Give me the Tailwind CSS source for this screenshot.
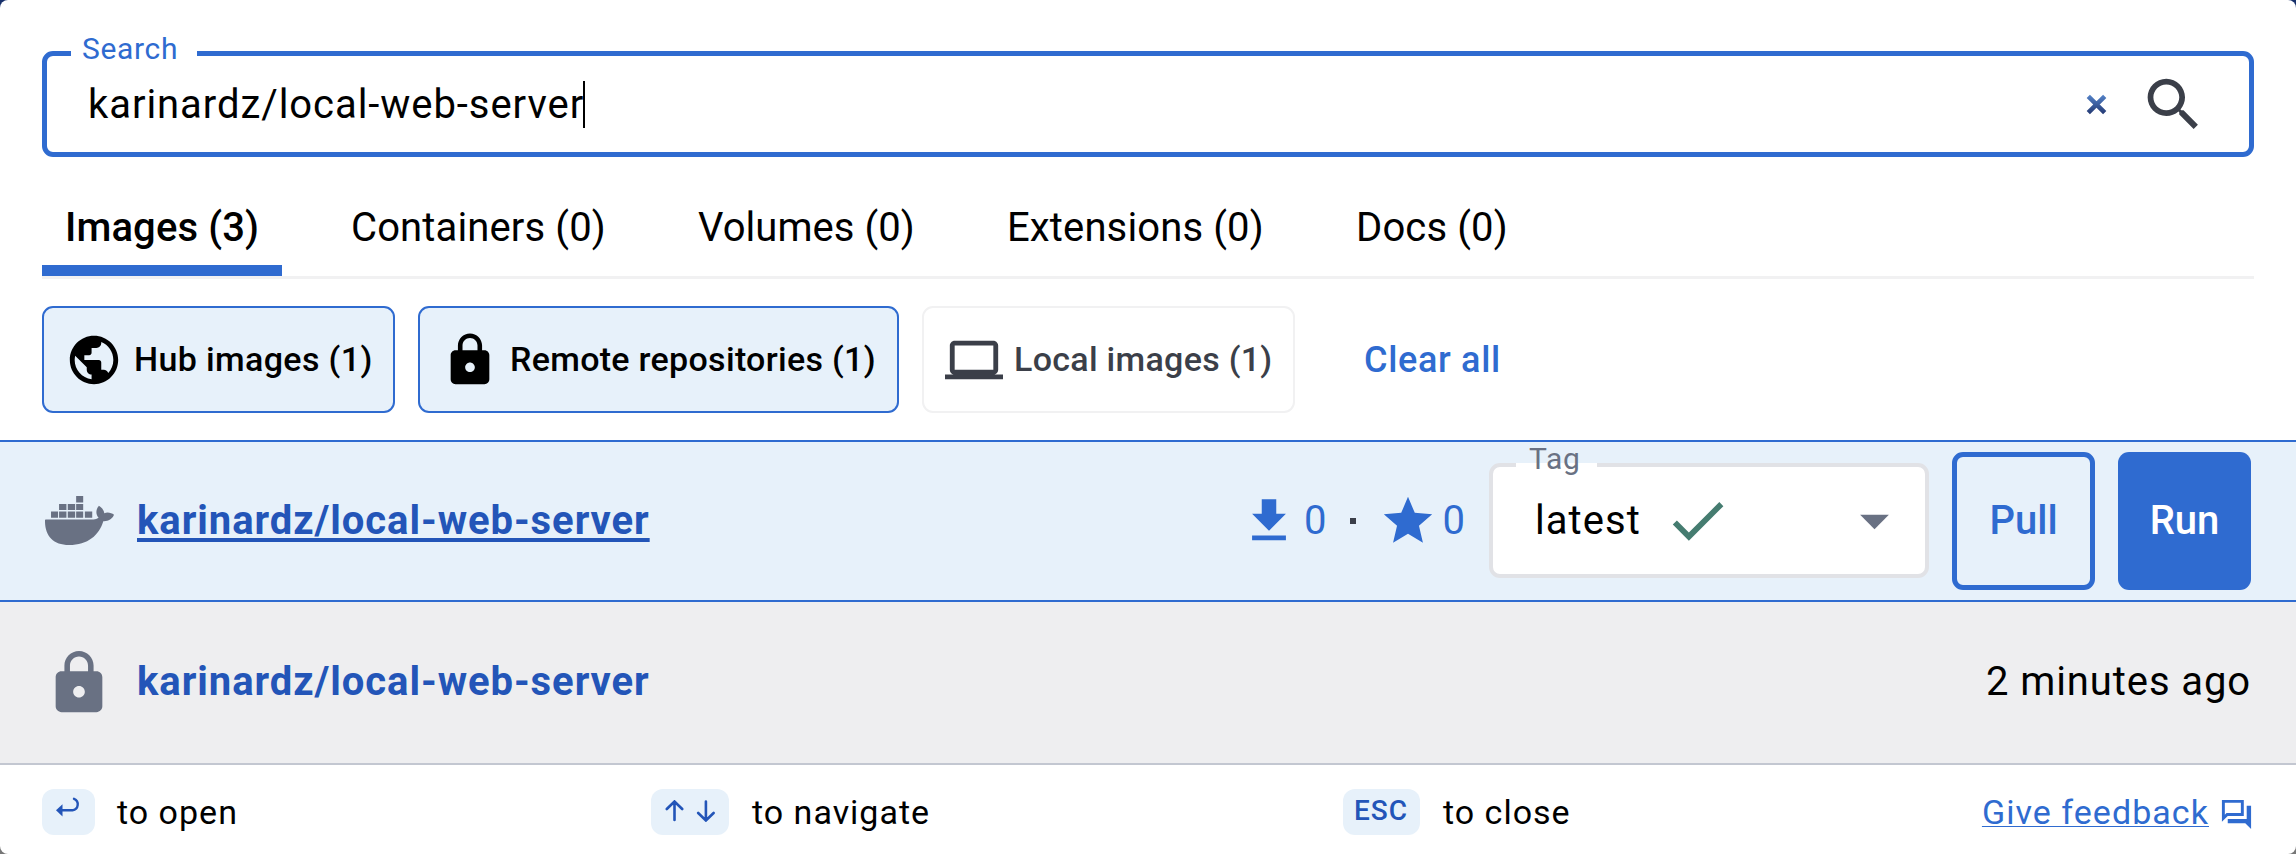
<!DOCTYPE html>
<html lang="en">
<head>
<meta charset="utf-8">
<title>Search</title>
<script src="https://cdn.jsdelivr.net/npm/@tailwindcss/browser@4"></script>
</head>
<body class="bg-linear-to-b from-[#17306b] to-[#777777] font-['Roboto',sans-serif] text-black">
<main class="flex h-[854px] w-[2296px] flex-col overflow-hidden rounded-[8px] bg-white whitespace-nowrap">

  <div class="px-[42px] pt-[51px]">
    <!-- Search field -->
    <div class="relative flex h-[106px] items-center rounded-[11px] border-5 border-[#2f6bd0] pl-[41px]">
      <span class="absolute -top-[5px] left-[24px] h-[5px] w-[126px] bg-white"></span>
      <label class="absolute -top-[22px] left-[35px] text-[30px] leading-[30px] tracking-[0.67px] text-[#2f6bd0]">Search</label>
      <span class="pt-[2px] text-[40px] leading-[48px] tracking-[0.94px]">karinardz/local-web-server</span>
      <span class="-ml-px h-[47px] w-[2px] bg-black"></span>
      <svg class="mr-[32px] ml-auto size-[21px]" viewBox="0 0 21 21">
        <defs><linearGradient id="g" x1="0" y1="0" x2="0" y2="21" gradientUnits="userSpaceOnUse"><stop stop-color="#5585cc"/><stop offset="1" stop-color="#22366f"/></linearGradient></defs>
        <path d="M2.3 2.3l16.4 16.4M18.7 2.3L2.3 18.7" stroke="url(#g)" stroke-width="4.600" fill="none"/>
      </svg>
      <svg class="mr-[41px] size-[69px] fill-[#3b3f49]" viewBox="0 0 24 24"><path d="M15.5 14h-.79l-.28-.27C15.41 12.59 16 11.11 16 9.5 16 5.91 13.09 3 9.5 3S3 5.91 3 9.5 5.91 16 9.5 16c1.61 0 3.09-.59 4.23-1.57l.27.28v.79l5 4.99L20.49 19l-4.99-5zm-6 0C7.01 14 5 11.99 5 9.5S7.01 5 9.5 5 14 7.01 14 9.5 11.99 14 9.5 14z"/></svg>
    </div>

    <!-- Tabs -->
    <nav class="mt-[22px] flex h-[100px] gap-[45px] border-b-3 border-[#f1f1f2] text-[40px] tracking-[0.13px]">
      <a class="flex w-[240px] items-center border-b-11 border-[#2f6bd0] pt-[11px] pl-[23px] font-medium">Images (3)</a>
      <a class="flex w-[304px] items-center pl-[24px]">Containers (0)</a>
      <a class="flex w-[263px] items-center pl-[22px] tracking-[0.06px]">Volumes (0)</a>
      <a class="flex w-[304px] items-center pl-[23px]">Extensions (0)</a>
      <a class="flex items-center pl-[23px]">Docs (0)</a>
    </nav>

    <!-- Filters -->
    <div class="my-[27px] flex h-[107px] gap-[23px] text-[34px] font-medium">
      <button class="flex w-[353px] items-center gap-[11px] rounded-[11px] border-2 border-[#2f6bd0] bg-[#e7f1fa] pl-[21px] tracking-[0.36px]">
        <svg class="size-[58px] shrink-0" viewBox="0 0 24 24"><path d="M12 2C6.48 2 2 6.48 2 12s4.48 10 10 10 10-4.48 10-10S17.52 2 12 2zm-1 17.93c-3.95-.49-7-3.85-7-7.93 0-.62.08-1.21.21-1.79L9 15v1c0 1.1.9 2 2 2v1.93zm6.900-2.540c-.26-.81-1-1.390-1.900-1.390h-1v-3c0-.55-.45-1-1-1H8v-2h2c.55 0 1-.45 1-1V7h2c1.100 0 2-.9 2-2v-.41c2.930 1.190 5 4.060 5 7.410 0 2.080-.8 3.970-2.100 5.390z"/></svg>
        <span>Hub images (1)</span>
      </button>
      <button class="flex w-[481px] items-center gap-[11px] rounded-[11px] border-2 border-[#2f6bd0] bg-[#e7f1fa] pl-[21px] tracking-[0.3px]">
        <svg class="size-[58px] shrink-0" viewBox="0 0 24 24"><path d="M18 8h-1V6c0-2.760-2.240-5-5-5S7 3.240 7 6v2H6c-1.100 0-2 .9-2 2v10c0 1.100.9 2 2 2h12c1.100 0 2-.9 2-2V10c0-1.100-.9-2-2-2zm-6 9c-1.100 0-2-.9-2-2s.9-2 2-2 2 .9 2 2-.9 2-2 2zm3.100-9H8.900V6c0-1.710 1.390-3.100 3.100-3.100s3.100 1.390 3.100 3.100v2z"/></svg>
        <span>Remote repositories (1)</span>
      </button>
      <button class="flex w-[373px] items-center gap-[11px] rounded-[11px] border-2 border-[#f1f1f2] bg-white pl-[21px] tracking-[0.29px] text-[#3b3f49]">
        <svg class="size-[58px] shrink-0 fill-[#3b3f49]" viewBox="0 0 24 24"><path d="M20 18c1.100 0 2-.9 2-2V6c0-1.100-.9-2-2-2H4c-1.100 0-2 .9-2 2v10c0 1.100.9 2 2 2H0v2h24v-2h-4zM4 6h16v10H4V6z"/></svg>
        <span>Local images (1)</span>
      </button>
      <button class="ml-[46px] text-[36px] tracking-[0.68px] text-[#2f6bd0]">Clear all</button>
    </div>
  </div>

  <!-- Hub result -->
  <div class="flex h-[162px] shrink-0 items-center border-y-2 border-[#2f6bd0] bg-[#e7f1fa] pr-[45px] pl-[45px] text-[40px]">
    <svg class="mb-[2px] h-[49px] w-[69px] fill-[#697183]" viewBox="27 48 206 146">
      <path d="M120 48h21v19h-21zM69 72h22v18H69zM95 72h22v18H95zM120 72h21v18h-21zM45 94h21v19H45zM69 94h22v19H69zM95 94h22v19H95zM120 94h21v19h-21zM146 94h22v19h-22z"/>
      <path d="M29 118H172Q180 118 187 113C178 103 178 88 188 77C197 83 203 90 204 99C214 95 226 98 233 104C228 117 215 124 201 123C189 164 155 194 99 194C50 194 26 165 27 120Q27 118 29 118z"/>
    </svg>
    <a class="ml-[23px] font-bold tracking-[0.94px] text-[#2355b8] underline decoration-4 underline-offset-[4px] [text-decoration-skip-ink:none]">karinardz/local-web-server</a>

    <div class="mr-[24px] ml-auto flex items-center text-[#2f6bd0]">
      <svg class="mb-px size-[58px] fill-[#2f6bd0]" viewBox="0 0 24 24"><path d="M19 9h-4V3H9v6H5l7 7 7-7zM5 18v2h14v-2H5z"/></svg>
      <span class="ml-[6px]">0</span>
      <span class="ml-[23px] size-[6px] bg-[#3b3f49]"></span>
      <svg class="mb-px ml-[23px] size-[58px] fill-[#2f6bd0]" viewBox="0 0 24 24"><path d="M12 17.270L18.180 21l-1.640-7.030L22 9.240l-7.190-.61L12 2 9.190 8.630 2 9.240l5.460 4.730L5.820 21z"/></svg>
      <span class="ml-[6px]">0</span>
    </div>

    <div class="relative mb-px flex h-[115px] w-[440px] items-center rounded-[11px] border-4 border-[#e1e2e6] bg-white pl-[42px]">
      <span class="absolute -top-[4px] left-[23px] h-[4px] w-[81px] bg-white"></span>
      <label class="absolute -top-[23px] left-[36px] text-[30px] leading-[30px] tracking-[0.67px] text-[#697183]">Tag</label>
      <span class="tracking-[1.05px]">latest</span>
      <svg class="ml-[22px] size-[69px] fill-[#457c70]" viewBox="0 0 24 24"><path d="M9 16.170L4.830 12l-1.420 1.410L9 19 21 7l-1.410-1.410z"/></svg>
      <svg class="mr-[16px] ml-auto size-[69px] fill-[#697183]" viewBox="0 0 24 24"><path d="M7 10l5 5 5-5z"/></svg>
    </div>
    <button class="ml-[23px] h-[138px] w-[143px] rounded-[11px] border-5 border-[#2f6bd0] font-medium text-[#2f6bd0]">Pull</button>
    <button class="ml-[23px] h-[138px] w-[133px] rounded-[11px] bg-[#2f6bd0] font-medium text-white">Run</button>
  </div>

  <!-- Remote repository result -->
  <div class="flex h-[163px] shrink-0 items-center border-b-2 border-[#c3c7d1] bg-[#eeeef0] pr-[45px] pl-[44px] text-[40px]">
    <svg class="size-[70px] fill-[#697183]" viewBox="0 0 24 24"><path d="M18 8h-1V6c0-2.760-2.240-5-5-5S7 3.240 7 6v2H6c-1.100 0-2 .9-2 2v10c0 1.100.9 2 2 2h12c1.100 0 2-.9 2-2V10c0-1.100-.9-2-2-2zm-6 9c-1.100 0-2-.9-2-2s.9-2 2-2 2 .9 2 2-.9 2-2 2zm3.100-9H8.900V6c0-1.710 1.390-3.100 3.100-3.100s3.100 1.390 3.100 3.100v2z"/></svg>
    <a class="mb-[2px] ml-[23px] font-bold tracking-[0.94px] text-[#2355b8]">karinardz/local-web-server</a>
    <span class="mb-[2px] ml-auto tracking-[0.9px]">2 minutes ago</span>
  </div>

  <!-- Shortcuts -->
  <footer class="flex items-start px-[42px] pt-[24px] text-[34px] leading-[46px] tracking-[1px]">
    <div class="flex w-[609px] gap-[22px]">
      <kbd class="flex h-[46px] w-[53px] items-start rounded-[12px] bg-[#e7f1fa] pt-[8px] pl-[14px]">
        <svg class="h-[20px] w-[25px]" viewBox="0 0 25 20"><path d="M0 13.300L6.500 7.200v12.200z" fill="#2355b8"/><path d="M5 13.300H16a6 6 0 0 0 1.500-11.500" transform="translate(.5 0)" fill="none" stroke="#2355b8" stroke-width="2.400" stroke-linecap="round"/></svg>
      </kbd>
      <span>to open</span>
    </div>
    <div class="flex w-[692px] gap-[23px]">
      <kbd class="flex h-[46px] w-[78px] items-start justify-center rounded-[12px] bg-[#e7f1fa] pt-[11px]">
        <svg class="h-[22px] w-[50px]" viewBox="0 0 50 22"><path d="M9.500 20V2M1.800 9l7.700-7.500L17.200 9M40.900 1.500V20M33.200 13l7.700 7.500L48.600 13" fill="none" stroke="#2355b8" stroke-width="2.600" stroke-linecap="round"/></svg>
      </kbd>
      <span>to navigate</span>
    </div>
    <div class="flex gap-[23px]">
      <kbd class="h-[46px] w-[77px] rounded-[12px] bg-[#e7f1fa] pl-[11px] font-['Roboto',sans-serif] text-[28px] leading-[44px] font-medium text-[#2355b8]">ESC</kbd>
      <span>to close</span>
    </div>
    <div class="ml-auto flex gap-[10px] text-[#2f6bd0]">
      <a class="tracking-[1.05px] underline decoration-1 underline-offset-[2px] [text-decoration-skip-ink:none]">Give feedback</a>
      <svg class="mt-[8px] size-[35px] fill-[#2f6bd0]" viewBox="0 0 24 24"><path d="M15 4v7H5.170L4 12.170V4h11m2-2H2v15l4-4h11V2zm5 4h-3v9H6v3h12l4 4V6z"/></svg>
    </div>
  </footer>
</main>
</body>
</html>
